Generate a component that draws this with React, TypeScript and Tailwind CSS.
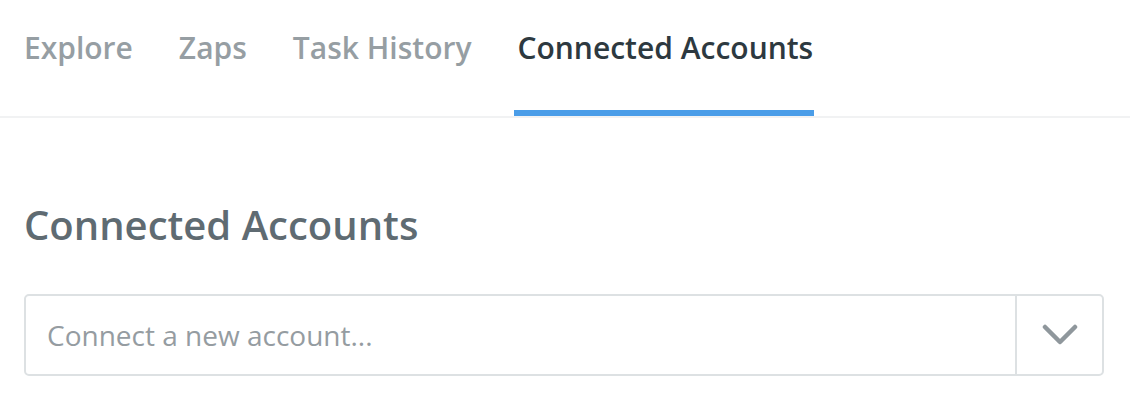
const tabs = ['Explore', 'Zaps', 'Task History', 'Connected Accounts'];

export default function App() {
  const active = 'Connected Accounts';
  return (
    <div className="w-[1130px] h-[408px] bg-white font-['Open_Sans',sans-serif]">
      <nav className="flex gap-[46px] px-6 border-b-2 border-[#f1f2f3] h-[118px]">
        {tabs.map((t) => (
          <div
            key={t}
            className={`flex flex-col justify-between text-[30px] font-semibold ${
              t === active ? 'text-[#2d3940]' : 'text-[#969ea3]'
            }`}
          >
            <span className="pt-[25px] leading-[46px]">{t}</span>
            {t === active && <span className="h-[6px] bg-[#4a9de8] -ml-[3px] -mr-[1px]" />}
          </div>
        ))}
      </nav>
      <div className="px-6 pt-[80px]">
        <h1 className="text-[40px] font-semibold text-[#5f6b72] leading-[54px]">Connected Accounts</h1>
        <div className="mt-[42px] flex h-[82px] border-2 border-[#dde1e3] rounded-[5px] w-[1080px]">
          <div className="flex-1 flex items-center pl-[21px] text-[28px] text-[#959ca1]">
            Connect a new account...
          </div>
          <div className="w-[87px] border-l-2 border-[#dde1e3] flex items-center justify-center">
            <svg width="36" height="22" viewBox="0 0 36 22" fill="none">
              <path d="M3 3 L18 18 L33 3" stroke="#8f979c" strokeWidth="4.5" strokeLinecap="round" strokeLinejoin="round" />
            </svg>
          </div>
        </div>
      </div>
    </div>
  );
}
